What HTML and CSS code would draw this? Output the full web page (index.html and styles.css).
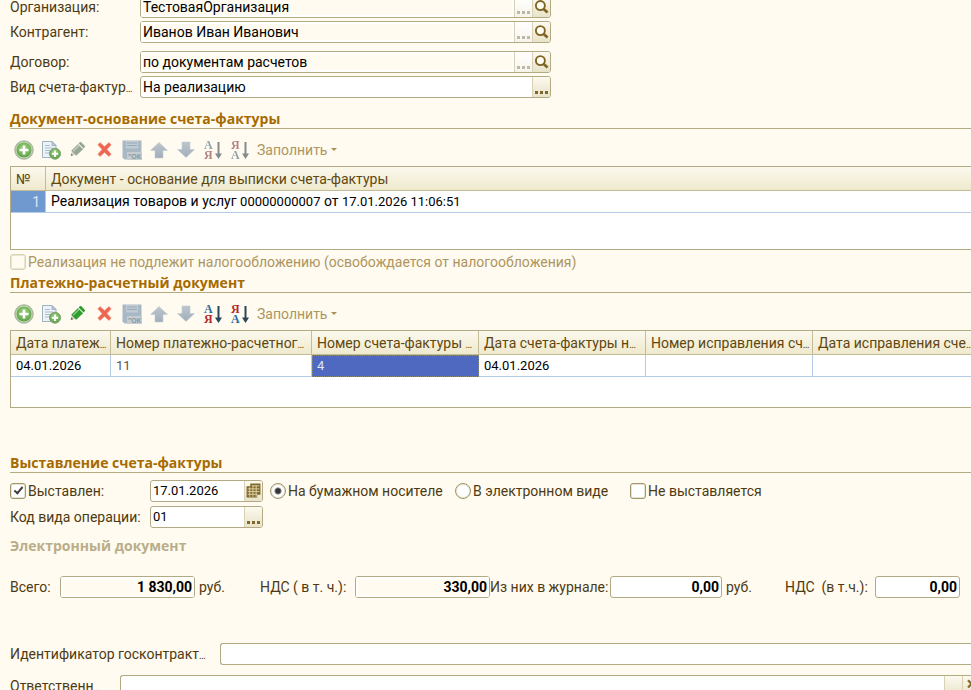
FILE: index.html
```html
<!DOCTYPE html>
<html lang="ru">
<head>
<meta charset="utf-8">
<title>Счет-фактура</title>
<link rel="stylesheet" href="styles.css">
</head>
<body>

<svg class="sprite" aria-hidden="true">
    <defs>
        <radialGradient id="g-green" cx="50%" cy="40%" r="60%">
            <stop offset="0" stop-color="#a5d583"/><stop offset="1" stop-color="#5a9f48"/>
        </radialGradient>
        <linearGradient id="g-grey" x1="0" y1="0" x2="0" y2="1">
            <stop offset="0" stop-color="#bcc6ce"/><stop offset="1" stop-color="#a1aeb9"/>
        </linearGradient>
    </defs>
    <symbol id="i-add" viewBox="0 0 20 20">
        <circle cx="10" cy="10" r="9.3" fill="#90a884" stroke="#b4bea9"/>
        <circle cx="10" cy="10" r="8" fill="url(#g-green)" stroke="#d8e8ca" stroke-width=".8"/>
        <path d="M10 5.5v9M5.5 10h9" stroke="#fff" stroke-width="2.6"/>
    </symbol>
    <symbol id="i-copy" viewBox="0 0 20 20">
        <path d="M1.5 1.5h9.5l4 4v12H1.5z" fill="#edf3f7" stroke="#9fb2c3"/>
        <path d="M11 1.5v4h4z" fill="#b8c9d8" stroke="#9fb2c3"/>
        <path d="M4 5.5h5M4 8h8M4 10.5h7M4 13h5" stroke="#a9bdd0"/>
        <circle cx="14" cy="13.7" r="5.5" fill="url(#g-green)" stroke="#7fa071"/>
        <path d="M14 10.5v6.4M10.8 13.7h6.4" stroke="#fff" stroke-width="2"/>
    </symbol>
    <symbol id="i-edit" viewBox="0 0 20 20">
        <path d="M2 17.5l1.5-6 4.5 4.5z" fill="#d8d6c0"/>
        <path d="M2 17.5l.8-3 2.2 2.2z" fill="#586052"/>
        <path d="M2.6 11.6L10.6 3.6l6 6L8.4 17.4z" fill="currentColor"/>
        <path d="M4.8 12l7.400-7.400" stroke="#fff" stroke-opacity=".45" stroke-width="1.6"/>
        <path d="M11.2 3l1.5-1.500c.6-.6 1.200-.6 1.800 0l4 4c.6.6.6 1.200 0 1.800l-1.500 1.500z" fill="currentColor"/>
        <path d="M10.900 3.300l6 6" stroke="#fff" stroke-opacity=".5"/>
    </symbol>
    <symbol id="i-del" viewBox="0 0 20 20">
        <path d="M2 4.5L4.8 1.7 10 6.6l5.2-4.900L18 4.500 13 10l5 5.500-2.800 2.800L10 13.400l-5.200 4.900L2 15.500 7 10z" fill="#ee6552" stroke="#f4a393" stroke-width=".7"/>
    </symbol>
    <symbol id="i-save" viewBox="0 0 20 20">
        <path d="M.5.5h19v19h-17l-2-2z" fill="#a9b8c5"/>
        <path d="M4 1h12v7.5H4z" fill="#c1cbd3"/>
        <path d="M5 3h10M5 5.5h10" stroke="#98a9b7"/>
        <path d="M5 12h15v8H5z" fill="#c6cccf"/>
        <text x="6" y="19" class="ok-mark">"ОК</text>
    </symbol>
    <symbol id="i-up" viewBox="0 0 20 20">
        <path d="M10 2.5l8.5 8h-4.500v7.500H6v-7.500H1.500z" fill="url(#g-grey)" stroke="#c2cbd0" stroke-width=".6"/>
    </symbol>
    <symbol id="i-down" viewBox="0 0 20 20">
        <path d="M10 17.5l8.5-8h-4.500V2H6v7.500H1.500z" fill="url(#g-grey)" stroke="#c2cbd0" stroke-width=".6"/>
    </symbol>
    <symbol id="i-asc" viewBox="0 0 20 20">
        <text x="1" y="9" class="ltr blue">А</text>
        <text x="1" y="19" class="ltr red">Я</text>
        <path d="M15.500 2v15" class="arrow"/>
        <path d="M12 13.500h7l-3.500 5.500z" class="tip"/>
    </symbol>
    <symbol id="i-desc" viewBox="0 0 20 20">
        <text x="1" y="9" class="ltr red">Я</text>
        <text x="1" y="19" class="ltr blue">А</text>
        <path d="M15.500 2v15" class="arrow"/>
        <path d="M12 13.500h7l-3.500 5.500z" class="tip"/>
    </symbol>
    <symbol id="i-find" viewBox="0 0 16 16">
        <circle cx="6.8" cy="7" r="4.8" fill="#fffdf4" stroke="#7e6420" stroke-width="2"/>
        <path d="M10 10.3l4.5 4" stroke="#7e6420" stroke-width="2.8"/>
    </symbol>
    <symbol id="i-cal" viewBox="0 0 14 14">
        <path d="M4 .5h9.5v10.5h-3v2.5H.5V3H4z" fill="#80682d"/>
        <path d="M1.5 5.5h11M1.5 8h11M1.5 10.5h9M5.5 2.7h7M3.5 4v9M6.5 2v11M9.5 2v11" stroke="#e9ddb4" stroke-width=".8"/>
    </symbol>
</svg>

<main>
    <form class="fields">
        <div class="row">
            <label for="org">Организация:</label>
            <div class="box locked">
                <input type="text" id="org" value="ТестоваяОрганизация" readonly>
                <button type="button" class="pick" disabled aria-label="Выбрать"><i></i><i></i><i></i></button>
                <button type="button" class="pick" aria-label="Открыть"><svg><use href="#i-find"/></svg></button>
            </div>
        </div>
        <div class="row">
            <label for="partner">Контрагент:</label>
            <div class="box locked">
                <input type="text" id="partner" value="Иванов Иван Иванович" readonly>
                <button type="button" class="pick" disabled aria-label="Выбрать"><i></i><i></i><i></i></button>
                <button type="button" class="pick" aria-label="Открыть"><svg><use href="#i-find"/></svg></button>
            </div>
        </div>
        <div class="row apart">
            <label for="contract">Договор:</label>
            <div class="box locked">
                <input type="text" id="contract" value="по документам расчетов" readonly>
                <button type="button" class="pick" disabled aria-label="Выбрать"><i></i><i></i><i></i></button>
                <button type="button" class="pick" aria-label="Открыть"><svg><use href="#i-find"/></svg></button>
            </div>
        </div>
        <div class="row">
            <label for="kind">Вид счета-фактур<small>…</small></label>
            <div class="box">
                <input type="text" id="kind" value="На реализацию">
                <button type="button" class="pick" aria-label="Выбрать"><i></i><i></i><i></i></button>
            </div>
        </div>
    </form>

    <section class="base">
        <h2>Документ-основание счета-фактуры</h2>
        <div class="toolbar">
            <button type="button" aria-label="Добавить"><svg><use href="#i-add"/></svg></button>
            <button type="button" aria-label="Скопировать"><svg><use href="#i-copy"/></svg></button>
            <button type="button" class="edit off" aria-label="Изменить"><svg class="small"><use href="#i-edit"/></svg></button>
            <button type="button" aria-label="Удалить"><svg class="small"><use href="#i-del"/></svg></button>
            <button type="button" aria-label="Записать"><svg><use href="#i-save"/></svg></button>
            <button type="button" aria-label="Вверх"><svg><use href="#i-up"/></svg></button>
            <button type="button" aria-label="Вниз"><svg><use href="#i-down"/></svg></button>
            <button type="button" class="off" aria-label="По возрастанию"><svg><use href="#i-asc"/></svg></button>
            <button type="button" class="off" aria-label="По убыванию"><svg><use href="#i-desc"/></svg></button>
            <button type="button" class="fill">Заполнить</button>
        </div>
        <div class="grid">
            <table>
                <colgroup><col class="c-num"><col></colgroup>
                <thead><tr><th>№</th><th>Документ - основание для выписки счета-фактуры</th></tr></thead>
                <tbody><tr><td class="num">1</td><td>Реализация товаров и услуг <span class="digits">00000000007</span> от <span class="digits">17.01.2026 11:06:51</span></td></tr></tbody>
            </table>
        </div>
        <label class="check muted"><input type="checkbox" disabled>Реализация не подлежит налогообложению (освобождается от налогообложения)</label>
    </section>

    <section class="payment">
        <h2>Платежно-расчетный документ</h2>
        <div class="toolbar">
            <button type="button" aria-label="Добавить"><svg><use href="#i-add"/></svg></button>
            <button type="button" aria-label="Скопировать"><svg><use href="#i-copy"/></svg></button>
            <button type="button" class="edit" aria-label="Изменить"><svg class="small"><use href="#i-edit"/></svg></button>
            <button type="button" aria-label="Удалить"><svg class="small"><use href="#i-del"/></svg></button>
            <button type="button" aria-label="Записать"><svg><use href="#i-save"/></svg></button>
            <button type="button" aria-label="Вверх"><svg><use href="#i-up"/></svg></button>
            <button type="button" aria-label="Вниз"><svg><use href="#i-down"/></svg></button>
            <button type="button" aria-label="По возрастанию"><svg><use href="#i-asc"/></svg></button>
            <button type="button" aria-label="По убыванию"><svg><use href="#i-desc"/></svg></button>
            <button type="button" class="fill">Заполнить</button>
        </div>
        <div class="grid">
            <table>
                <colgroup><col class="c-date"><col class="c-pay"><col class="c-inv"><col class="c-inv"><col class="c-inv"><col></colgroup>
                <thead><tr>
                    <th>Дата платеж<small>…</small></th>
                    <th>Номер платежно-расчетног<small>…</small></th>
                    <th>Номер счета-фактуры <small>…</small></th>
                    <th>Дата счета-фактуры н<small>…</small></th>
                    <th>Номер исправления сч<small>…</small></th>
                    <th>Дата исправления сче<small>…</small></th>
                </tr></thead>
                <tbody><tr>
                    <td class="digits">04.01.2026</td>
                    <td class="digits grey">11</td>
                    <td class="digits selected">4</td>
                    <td class="digits">04.01.2026</td>
                    <td></td>
                    <td></td>
                </tr></tbody>
            </table>
        </div>
    </section>

    <section class="issue">
        <h2>Выставление счета-фактуры</h2>
        <div class="issue-grid">
            <label class="check"><input type="checkbox" checked>Выставлен:</label>
            <div class="box">
                <input type="text" class="digits" value="17.01.2026" aria-label="Дата выставления">
                <button type="button" class="pick" aria-label="Календарь"><svg><use href="#i-cal"/></svg></button>
            </div>
            <label class="check"><input type="radio" name="way" checked>На бумажном носителе</label>
            <label class="check"><input type="radio" name="way">В электронном виде</label>
            <label class="check"><input type="checkbox">Не выставляется</label>
            <label for="code">Код вида операции:</label>
            <div class="box">
                <input type="text" class="digits" id="code" value="01">
                <button type="button" class="pick" aria-label="Выбрать"><i></i><i></i><i></i></button>
            </div>
        </div>
        <h3>Электронный документ</h3>
    </section>

    <div class="totals">
        <label for="total">Всего:</label>
        <div class="box locked"><input type="text" id="total" value="1 830,00" readonly></div>
        <span class="unit">руб.</span>
        <label for="vat">НДС ( в т. ч.):</label>
        <div class="box locked"><input type="text" id="vat" value="330,00" readonly></div>
        <label for="journal">Из них в журнале:</label>
        <div class="box"><input type="text" id="journal" value="0,00"></div>
        <span class="unit">руб.</span>
        <label for="jvat">НДС&nbsp; (в т.ч.):</label>
        <div class="box"><input type="text" id="jvat" value="0,00"></div>
    </div>

    <div class="row contract-id">
        <label for="gov">Идентификатор госконтракт<small>…</small></label>
        <div class="box open"><input type="text" id="gov"></div>
    </div>
    <div class="row person">
        <label for="resp">Ответственн<small>…</small></label>
        <div class="box open">
            <input type="text" id="resp">
            <button type="button" class="pick" aria-label="Выбрать"></button>
            <button type="button" class="pick clear" aria-label="Очистить">×</button>
        </div>
    </div>
</main>

</body>
</html>
```
FILE: styles.css
```css
* { box-sizing: border-box; }
html, body { margin: 0; padding: 0; height: 100%; overflow: hidden; }
body { font: normal 14px/18px Roboto, 'Liberation Sans', sans-serif; color: #4d3a12; background-color: #fffbf0; }
main { padding-left: 10px; }
input, button { margin: 0; padding: 0; border: 0; background: none; font: inherit; color: inherit; }
label, .unit { white-space: nowrap; }
small { font-size: 10px; line-height: 1; }
.sprite { position: absolute; width: 0; height: 0; }
.digits { font-size: 13px; }

/* the form is scrolled a little, so its first row is cut by the top edge */
.fields { display: flex; flex-direction: column; gap: 3px; margin-top: -4px; }
.row { display: flex; align-items: center; }
.row label { width: 130px; flex: none; }
.row .box { width: 411px; }
.apart { margin-top: 5px; }

.box { display: flex; height: 22px; border: 1px solid #b3a983; border-radius: 3px; background-color: #fff; overflow: hidden; }
.box input { flex: 1; min-width: 0; padding: 0 2px; color: #000; outline: 0; }
.locked input { border: 2px solid #fff; padding: 0; background-color: #fffbf0; }

.pick { display: flex; flex: none; justify-content: center; align-items: flex-end; gap: 2px; width: 18px; padding-bottom: 3px; border-left: 1px solid #d8d1b4; background: linear-gradient(#fcfaf0, #e8e3c9); color: #80682d; }
.pick i { width: 3px; height: 3px; background-color: #80682d; }
.pick:disabled { background: linear-gradient(#fff, #f7f4ea); }
.pick:disabled i { background-color: #bdb9aa; }
.pick svg { width: 15px; height: 15px; }
.clear { font-weight: bold; font-size: 18px; }

h2, h3 { margin: 0; font: bold 14px/18px 'Open Sans', sans-serif; }
h2 { color: #a66a00; border-bottom: 1px solid #b3a983; }
h3 { margin-top: 9px; color: #b9ae88; }
.base { margin-top: 12px; }
.payment { margin-top: 1px; }
.issue { margin-top: 46px; }

.toolbar { display: flex; padding: 7px 0 3px; }
.toolbar button { display: flex; width: 27px; height: 27px; align-items: center; justify-content: center; }
.toolbar svg { width: 20px; height: 20px; }
.toolbar svg.small { width: 17px; height: 17px; }
.toolbar .fill { width: auto; padding-left: 4px; gap: 4px; color: #ad9561; }
.fill::after { content: ''; border: 3px solid transparent; border-top-color: #ad8f55; border-bottom: 0; }
.edit { color: #2f9c2c; }
.edit.off { color: #6f9a72; opacity: .8; }
.off { opacity: .6; }
.off svg { filter: saturate(.5); }
.ltr { font: bold 12px 'Liberation Serif', serif; }
.blue { fill: #2e6c9c; }
.red { fill: #b3272d; }
.arrow { fill: none; stroke: #2b4456; stroke-width: 2; }
.tip { fill: #2b4456; }
.ok-mark { font: bold 7px 'Liberation Sans', sans-serif; fill: #8797a2; }

.grid { border: 1px solid #b3a983; border-right: 0; background-color: #fff; }
.base .grid { height: 84px; }
.payment .grid { height: 78px; }
table { width: 100%; table-layout: fixed; border-collapse: separate; border-spacing: 0; }
th, td { padding: 0 0 0 5px; white-space: nowrap; overflow: hidden; text-align: left; border-right: 1px solid #b5cae6; border-bottom: 1px solid #b5cae6; }
th { height: 24px; font-weight: normal; color: #5f4710; background: linear-gradient(#fbf9ee, #efe9cd); border-color: #c4bb98; }
td { height: 22px; color: #000; }
th:last-child, td:last-child { border-right: 0; }
.c-num { width: 35px; }
.c-date { width: 100px; }
.c-pay { width: 201px; }
.c-inv { width: 167px; }
td.num { padding-right: 5px; text-align: right; color: #dbe6f5; background-color: #7099d0; }
td.grey { color: #555; }
td.selected { color: #dfe5f7; background-color: #4f69c0; border: 1px dotted #8b8a74; padding-left: 4px; }

.check { display: flex; align-items: center; gap: 2px; }
.check input { appearance: none; width: 16px; height: 16px; flex: none; border: 1px solid #a09468; border-radius: 3px; background-color: #fff; box-shadow: inset 0 0 0 1px #e9e5d6; }
.check input[type=radio] { border-radius: 50%; }
.check input[type=radio]:checked { background: radial-gradient(#333 2px, #777 3px, #fff 4px); }
.check input[type=checkbox]:checked { display: flex; justify-content: center; }
.check input[type=checkbox]:checked::after { content: ''; width: 5px; height: 9px; margin-top: 1px; border: solid #3f3f3f; border-width: 0 2px 2px 0; box-sizing: border-box; transform: rotate(40deg); }
.check input:disabled { border-color: #d8d1b4; background-color: #fffbf0; }
.muted { height: 23px; color: #ad9561; }

.issue-grid { display: grid; grid-template-columns: 140px 120px 185px 175px auto; gap: 4px 0; align-items: center; padding-top: 7px; }
.issue-grid .box { width: 113px; }

.totals { display: grid; grid-template-columns: 50px 135px 65px 95px 135px 120px 112px 63px 90px 85px; align-items: center; margin-top: 21px; }
.totals input { text-align: right; font-weight: bold; }
.unit { padding-left: 4px; }

.contract-id { margin-top: 45px; }
.contract-id label { width: 210px; }
.person { margin-top: 10px; }
.person label { width: 110px; }
.row .open { width: auto; flex: 1; border-right: 0; border-radius: 3px 0 0 3px; }
/* the clear button runs past the window edge */
.person .open { margin-right: -9px; }
```
